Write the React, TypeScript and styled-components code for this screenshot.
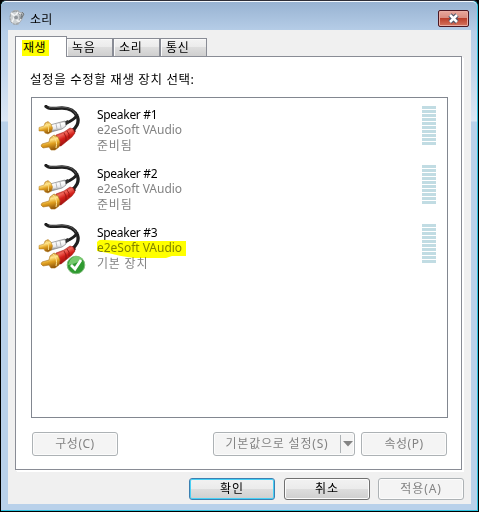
import React from "react";
import styled, { createGlobalStyle } from "styled-components";

const Global = createGlobalStyle`
  *{box-sizing:border-box}
  html,body{margin:0;padding:0;background:#000}
  body{font-family:"Noto Sans","Noto Sans CJK KR",sans-serif;font-size:12px;color:#000}
`;
const Window = styled.div`
  width:479px;height:512px;overflow:hidden;
  border:1px solid #000;border-top-color:#2e2e38;background:#2fc3e0;
  border-radius:6px 6px 0 0;
`;
const Frame = styled.div`
  width:476px;height:509px;display:flex;flex-direction:column;
  padding:0 6px 6px 7px;border-radius:5px 5px 0 0;
  border-top:1px solid #f3f8fd;
  background:linear-gradient(#98b3d2 0,#b7cee8 30px,#c4d7ec 70px,#dce7f5 119px,#b9d1ea 120px);
`;
const TitleBar = styled.header`
  height:28px;flex:none;display:flex;align-items:flex-start;padding:7px 2px 0 1px;
`;
const Title = styled.span`
  margin-left:5px;font-size:12px;line-height:22px;letter-spacing:.3px;flex:1;
`;
const Close = styled.button`
  width:31px;height:17px;margin-top:1px;padding:0;border:1px solid #4b1722;border-radius:2px;
  display:grid;place-items:center;box-shadow:inset 0 0 0 1px #e9aca2;
  background:linear-gradient(#e9a79c 0,#d98b7e 48%,#bb3f2b 50%,#d47560 100%);
`;
const Client = styled.main`
  width:463px;height:474px;background:#f0f0f0;padding:6px 7px 4px;display:flex;flex-direction:column;
`;
const Tabs = styled.nav`
  height:20px;display:flex;align-items:flex-end;flex:none;
`;
const Tab = styled.button<{ $active?: boolean }>`
  font:inherit;font-size:12px;letter-spacing:.8px;text-align:left;line-height:17px;
  width:${p => (p.$active ? 52 : 47)}px;height:${p => (p.$active ? 21 : 18)}px;
  margin-bottom:${p => (p.$active ? -1 : 0)}px;
  padding:0 0 0 ${p => (p.$active ? 6 : 5)}px;
  border:1px solid #898c95;border-bottom:0;
  background:${p => (p.$active ? "#fff" : "linear-gradient(#f3f3f3 0,#ebebeb 48%,#dddddd 50%,#cfcfcf 100%)")};
  box-shadow:${p => (p.$active ? "none" : "inset 1px 1px #fafafa")};
  position:relative;z-index:${p => (p.$active ? 1 : 0)};
  &:nth-child(2){margin-left:-1px}
`;
const Mark = styled.span`
  display:inline-block;height:16px;width:27px;background:#ff0;padding-left:1px;line-height:15px;letter-spacing:.4px;
  white-space:nowrap;
`;
const Panel = styled.section`
  width:447px;height:414px;flex:none;border:1px solid #898c95;background:#fff;padding:13px 13px 0 15px;
  box-shadow:1px 1px #fff,2px 2px #fff;
`;
const Prompt = styled.div`
  height:27px;line-height:20px;font-size:12.5px;letter-spacing:.6px;margin-left:-1px;
`;
const List = styled.div`
  width:417px;height:321px;border:1px solid #828790;padding:7px 11px 0 6px;
`;
const Row = styled.div`
  height:59px;display:flex;align-items:flex-start;
`;
const IconBox = styled.div`
  position:relative;width:50px;height:50px;flex:none;
  svg{display:block}
`;
const Badge = styled.svg`
  position:absolute;left:28px;top:32px;
`;
const Info = styled.div`
  flex:1;margin-left:9px;padding-top:2px;line-height:15px;position:relative;
`;
const Name = styled.div`
  letter-spacing:-.3px;
`;
const Detail = styled.div`
  color:#838383;letter-spacing:-.02px;
`;
const Status = styled(Detail)`
  padding-top:1px;letter-spacing:.8px;
`;
const Highlighter = styled.svg`
  position:absolute;left:-1px;top:15px;mix-blend-mode:multiply;
`;
const Meter = styled.div`
  width:14px;padding-top:1px;display:grid;gap:1px;
`;
const Bar = styled.i`
  height:3px;background:#c1dce3;
`;
const Actions = styled.div<{ $footer?: boolean }>`
  display:flex;width:${p => (p.$footer ? "449px" : "415px")};
  margin-top:${p => (p.$footer ? 8 : 14)}px;margin-left:${p => (p.$footer ? 0 : 1)}px;
  justify-content:${p => (p.$footer ? "flex-end" : "flex-start")};
  gap:${p => (p.$footer ? 8 : 6)}px;
`;
const Button = styled.button<{ $kind?: "default" | "normal"; $w?: number; $tall?: boolean; $push?: boolean }>`
  font:inherit;line-height:20px;padding:0;letter-spacing:${p => (p.$tall ? 0.5 : 0.9)}px;flex:none;
  width:${p => p.$w ?? 86}px;height:${p => (p.$tall ? 24 : 22)}px;border-radius:3px;
  margin-left:${p => (p.$push ? "auto" : 0)};
  margin-right:${p => (p.$kind === "default" ? "1px" : 0)};
  display:flex;align-items:center;justify-content:center;
  color:${p => (p.$kind ? "#000" : "#838383")};
  border:1px solid ${p => (p.$kind === "default" ? "#3c7fb1" : p.$kind ? "#707070" : "#adb2b5")};
  background:${p => (p.$kind ? "linear-gradient(#f2f2f2 0,#ebebeb 49%,#dddddd 51%,#cfcfcf 100%)" : "#f4f4f4")};
  box-shadow:inset 0 0 0 1px ${p => (p.$kind === "default" ? "#48d0f5" : "#fcfcfc")};
`;
const SplitLabel = styled.span`
  flex:1;text-align:center;letter-spacing:.8px;white-space:nowrap;
`;
const SplitArrow = styled.span`
  width:14px;height:18px;border-left:1px solid #adb2b5;display:grid;place-items:center;
`;

const SpeakerIcon = () => (
  <svg width="16" height="17" viewBox="0 0 16 17">
    <path d="M5 1l4 0 2 2 3 0 1 3-2 5-4 5-5-1-3-4V6l1-3z" fill="#a9aeb2" />
    <ellipse cx="6" cy="8.8" rx="5" ry="6.4" fill="#cdd1d3" stroke="#90969a" strokeDasharray="2 1" />
    <path d="M2 4l4 3-3 6M6 7l3-4M6 9l4 4" stroke="#f2f4f5" strokeWidth="1.6" fill="none" />
    <circle cx="7" cy="8.5" r="1.9" fill="#90969b" />
    <path d="M11 4l2 2-1 3M13 3l2 2-3 5" stroke="#747b80" fill="none" />
    <path d="M10 4l2 1M12 10l-2 3" stroke="#f8f8f8" />
  </svg>
);

const Cable = ({ id }: { id: number }) => (
  <svg width="48" height="48" viewBox="0 0 48 48">
    <defs>
      <linearGradient id={`red${id}`} x1=".25" y1=".1" x2=".65" y2=".9">
        <stop stopColor="#b3150f" /><stop offset=".3" stopColor="#f0665a" />
        <stop offset=".55" stopColor="#d3201a" /><stop offset="1" stopColor="#8d100d" />
      </linearGradient>
      <linearGradient id={`gold${id}`} x1=".3" y1="0" x2=".6" y2="1">
        <stop stopColor="#c07c12" /><stop offset=".35" stopColor="#ffe58a" />
        <stop offset=".6" stopColor="#e0a021" /><stop offset="1" stopColor="#8e5408" />
      </linearGradient>
      <linearGradient id={`white${id}`} x1=".3" y1="0" x2=".5" y2="1">
        <stop stopColor="#888" /><stop offset=".3" stopColor="#fff" />
        <stop offset=".65" stopColor="#e8e8ea" /><stop offset="1" stopColor="#68696b" />
      </linearGradient>
    </defs>
    <path d="M8 1.500C11 5 17 3 24 3c8 0 13 3 15.500 9 2 6-1 10-6 15" fill="none" stroke="#202020" strokeWidth="3.3" strokeLinecap="round" />
    <path d="M39 9c0 4-6 7-13 10.500" fill="none" stroke="#202020" strokeWidth="2.6" />
    <path d="M11 2.500c5 1 10-1 17 0 5 1 8 3 10 7" fill="none" stroke="#777" strokeWidth=".6" />
    <path d="M25 17l5-2 1 3-5 4z" fill="#303030" />
    <path d="M12 20l11-3 4-1 1 5-4 3-11 3z" fill={`url(#white${id})`} stroke="#85878a" strokeWidth=".7" />
    <path d="M18 19l1 5M22 18l1 5" stroke="#a8a9ac" strokeWidth=".8" />
    <path d="M1 22.500l5-1.500 1-3 3-1.500 3 2.500 1.500 4-1 4-3.500 2-3-1-1-2-5 0z" fill={`url(#gold${id})`} stroke="#b27b1f" strokeWidth=".5" />
    <path d="M8.500 18q3 4 2 9" fill="none" stroke="#ffe48f" strokeWidth=".8" />
    <path d="M32 26l3-3 3 3-3 4z" fill="#471010" />
    <path d="M18 30l8-3 6-4 3 1 2 4-3 4-11 9-4 0z" fill={`url(#red${id})`} stroke="#a11b15" strokeWidth=".5" />
    <path d="M26 28q3 4 2 8M29 26q3 3 2 7" fill="none" stroke="#88100c" strokeWidth=".8" />
    <path d="M4 39l7-2 1-4 4-3 4 2 2 5-1 5-4 3-4 0-2-3-6 1-2-2z" fill={`url(#gold${id})`} stroke="#a96e16" strokeWidth=".6" />
    <path d="M15 31q5 5 3 12" fill="none" stroke="#ffe48f" strokeWidth="1" />
  </svg>
);

const devices = [
  { name: "Speaker #1", status: "준비됨" },
  { name: "Speaker #2", status: "준비됨" },
  { name: "Speaker #3", status: "기본 장치", primary: true },
];

export default function App() {
  return (
    <>
      <Global />
      <Window>
        <Frame>
          <TitleBar>
            <SpeakerIcon />
            <Title>소리</Title>
            <Close aria-label="Close">
              <svg width="13" height="11" viewBox="0 0 13 11">
                <path d="M3 2l7 7M10 2L3 9" stroke="#4a5367" strokeWidth="4.6" />
                <path d="M3 2l7 7M10 2L3 9" stroke="#fff" strokeWidth="2.5" />
              </svg>
            </Close>
          </TitleBar>
          <Client>
            <Tabs>
              <Tab $active><Mark>재생</Mark></Tab>
              <Tab>녹음</Tab>
              <Tab>소리</Tab>
              <Tab>통신</Tab>
            </Tabs>
            <Panel>
              <Prompt>설정을 수정할 재생 장치 선택:</Prompt>
              <List>
                {devices.map((d, i) => (
                  <Row key={d.name}>
                    <IconBox>
                      <Cable id={i} />
                      {d.primary && (
                        <Badge width="20" height="20" viewBox="0 0 20 20">
                          <circle cx="10" cy="10" r="8.8" fill="#2f9a30" stroke="#83bd7e" />
                          <path d="M2 10q8-1 15-6Q10-2 4 5z" fill="#76ca6e" />
                          <path d="M5 10l4 4 6-9" fill="none" stroke="#fff" strokeWidth="2.8" />
                        </Badge>
                      )}
                    </IconBox>
                    <Info>
                      <Name>{d.name}</Name>
                      <Detail>e2eSoft VAudio</Detail>
                      <Status>{d.status}</Status>
                      {d.primary && (
                        <Highlighter width="92" height="24" viewBox="0 0 92 24">
                          <path d="M1 4Q3 1 9 2L30 3H90V18H76L70 20H38L25 18 12 15 1 13z" fill="#ff0" />
                        </Highlighter>
                      )}
                    </Info>
                    <Meter>{Array.from({ length: 10 }, (_, n) => <Bar key={n} />)}</Meter>
                  </Row>
                ))}
              </List>
              <Actions>
                <Button $tall>구성(C)</Button>
                <Button $tall $w={142} $push>
                  <SplitLabel>기본값으로 설정(S)</SplitLabel>
                  <SplitArrow>
                    <svg width="10" height="6" viewBox="0 0 10 6"><path d="M0 0h10L5 5.5z" fill="#838383" /></svg>
                  </SplitArrow>
                </Button>
                <Button $tall>속성(P)</Button>
              </Actions>
            </Panel>
            <Actions $footer>
              <Button $kind="default">확인</Button>
              <Button $kind="normal">취소</Button>
              <Button>적용(A)</Button>
            </Actions>
          </Client>
        </Frame>
      </Window>
    </>
  );
}
